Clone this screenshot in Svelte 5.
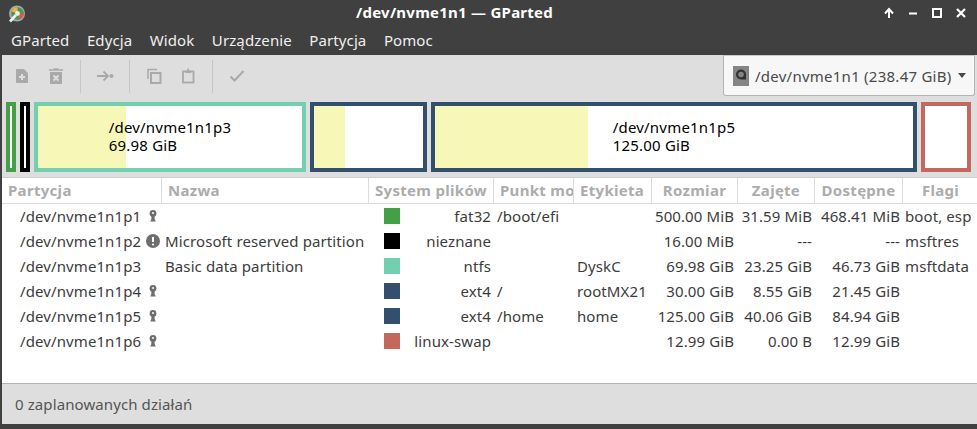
<script>
  const menus = ['GParted', 'Edycja', 'Widok', 'Urządzenie', 'Partycja', 'Pomoc'];
  const parts = [
    { w: 10, color: '#43a047', used: 0 },
    { w: 10, color: '#000000', used: 0 },
    { w: 272, color: '#72d0b0', used: 33.3, name: '/dev/nvme1n1p3', size: '69.98 GiB' },
    { w: 117, color: '#32506e', used: 28.4 },
    { w: 486, color: '#32506e', used: 32, name: '/dev/nvme1n1p5', size: '125.00 GiB' },
    { w: 50, color: '#c4675c', used: 0 }
  ];
  const cols = [
    { t: 'Partycja', w: 160, cls: 'left' },
    { t: 'Nazwa', w: 207, cls: 'left' },
    { t: 'System plików', w: 125, cls: 'center' },
    { t: 'Punkt mo', w: 80, cls: 'left' },
    { t: 'Etykieta', w: 78, cls: 'left' },
    { t: 'Rozmiar', w: 86, cls: 'center' },
    { t: 'Zajęte', w: 77, cls: 'center' },
    { t: 'Dostępne', w: 88, cls: 'center' },
    { t: 'Flagi', w: 75, cls: 'center' }
  ];
  const rows = [
    { p: 'p1', st: 'lock', n: '', c: '#43a047', fs: 'fat32', m: '/boot/efi', l: '', s: '500.00 MiB', u: '31.59 MiB', a: '468.41 MiB', f: 'boot, esp' },
    { p: 'p2', st: 'warn', n: 'Microsoft reserved partition', c: '#000000', fs: 'nieznane', m: '', l: '', s: '16.00 MiB', u: '---', a: '---', f: 'msftres' },
    { p: 'p3', st: '', n: 'Basic data partition', c: '#72d0b0', fs: 'ntfs', m: '', l: 'DyskC', s: '69.98 GiB', u: '23.25 GiB', a: '46.73 GiB', f: 'msftdata' },
    { p: 'p4', st: 'lock', n: '', c: '#32506e', fs: 'ext4', m: '/', l: 'rootMX21', s: '30.00 GiB', u: '8.55 GiB', a: '21.45 GiB', f: '' },
    { p: 'p5', st: 'lock', n: '', c: '#32506e', fs: 'ext4', m: '/home', l: 'home', s: '125.00 GiB', u: '40.06 GiB', a: '84.94 GiB', f: '' },
    { p: 'p6', st: 'lock', n: '', c: '#c4675c', fs: 'linux-swap', m: '', l: '', s: '12.99 GiB', u: '0.00 B', a: '12.99 GiB', f: '' }
  ];
</script>

<div class="window">
  <header class="titlebar">
    <svg class="appicon" width="18" height="18" viewBox="0 0 18 18">
      <circle cx="9" cy="8.500" r="8" fill="#a9a9a9" />
      <circle cx="9.500" cy="8.500" r="6.300" fill="#3f9a52" />
      <path d="M9.500 8.500V2.200A6.300 6.300 0 0 0 3.600 6.500Z" fill="#f2b632" />
      <path d="M9.500 8.500H15.800A6.300 6.300 0 0 1 12 14.300Z" fill="#e0574c" />
      <circle cx="9.500" cy="8.500" r="2.400" fill="#eee" />
      <path d="M2 16.500 8 10" stroke="#f0f0f0" stroke-width="2.600" />
    </svg>
    <span class="title">/dev/nvme1n1 — GParted</span>
    <div class="winbtns">
      <svg width="12" height="12" viewBox="0 0 12 12"><path d="M6 11V3M2 6.500 6 2l4 4.500" fill="none" stroke="#fff" stroke-width="2" /></svg>
      <svg width="12" height="12" viewBox="0 0 12 12"><path d="M2 6.500h8" stroke="#fff" stroke-width="2" /></svg>
      <svg width="12" height="12" viewBox="0 0 12 12"><rect x="2" y="2" width="8" height="8" fill="none" stroke="#fff" stroke-width="2" /></svg>
      <svg width="12" height="12" viewBox="0 0 12 12"><path d="M2 2l8 8M10 2l-8 8" stroke="#fff" stroke-width="2.200" /></svg>
    </div>
  </header>

  <nav class="menubar">
    {#each menus as m}<span class="menu">{m}</span>{/each}
  </nav>

  <div class="inner">
    <div class="toolbar">
      <div class="tools">
        <button class="tool" aria-label="Nowa">
          <svg width="16" height="16" viewBox="0 0 16 16"><path d="M3 1h7l4 4v9a1 1 0 0 1-1 1H3a1 1 0 0 1-1-1V2a1 1 0 0 1 1-1Z" fill="#a9a9a9" /><path d="M8 6v6M5 9h6" stroke="#dedede" stroke-width="2" /></svg>
        </button>
        <button class="tool" aria-label="Usuń">
          <svg width="16" height="16" viewBox="0 0 16 16"><path d="M1 2h14M5.500 1h5" stroke="#a9a9a9" stroke-width="1.700" /><path d="M2 4h12v12H2Z" fill="#a9a9a9" /><path d="M5.500 7.500l5 5M10.500 7.500l-5 5" stroke="#dedede" stroke-width="2" /></svg>
        </button>
        <i class="sep"></i>
        <button class="tool" aria-label="Zmień rozmiar">
          <svg width="18" height="16" viewBox="0 0 18 16"><path d="M1 8h11M7.500 3.500 12 8l-4.500 4.500" fill="none" stroke="#a9a9a9" stroke-width="1.800" /><circle cx="15.500" cy="8" r="2" fill="#a9a9a9" /></svg>
        </button>
        <i class="sep"></i>
        <button class="tool" aria-label="Kopiuj">
          <svg width="16" height="16" viewBox="0 0 16 16"><path d="M2 11V1.500H11" fill="none" stroke="#a9a9a9" stroke-width="1.500" /><rect x="5" y="5" width="9.500" height="10" fill="none" stroke="#a9a9a9" stroke-width="2" /></svg>
        </button>
        <button class="tool" aria-label="Wklej">
          <svg width="16" height="16" viewBox="0 0 16 16"><rect x="3" y="3.500" width="10.500" height="11" fill="none" stroke="#a9a9a9" stroke-width="1.800" /><path d="M5.500 2.500h2V0.500h1.500v2h2V5h-5.500Z" fill="#a9a9a9" /></svg>
        </button>
        <i class="sep"></i>
        <button class="tool" aria-label="Zastosuj">
          <svg width="16" height="16" viewBox="0 0 16 16"><path d="M1.500 8.500l4 4 9-9.500" fill="none" stroke="#a9a9a9" stroke-width="2" /></svg>
        </button>
      </div>
      <div class="combo">
        <svg class="disk" width="16" height="20" viewBox="0 0 16 20"><rect width="16" height="20" fill="#858585" /><path d="M8 3.500a5 5 0 1 0 0 10h5V8.500a5 5 0 0 0-5-5Z" fill="#333" /><circle cx="8" cy="8.500" r="2.800" fill="#858585" /></svg>
        <span>/dev/nvme1n1 (238.47 GiB)</span>
        <i class="caret"></i>
      </div>
    </div>

    <div class="graph">
      {#each parts as part}
        <div class="part" style="width:{part.w}px; border-color:{part.color}; --used:{part.used}%">
          {#if part.name}<div class="label">{part.name}<br />{part.size}</div>{/if}
        </div>
      {/each}
    </div>

    <div class="table">
      <div class="thead">
        {#each cols as c}<div class="th {c.cls}" style="width:{c.w}px">{c.t}</div>{/each}
      </div>
      <div class="tbody">
        {#each rows as r}
          <div class="tr">
            <div class="c-part">
              <span class="devname">/dev/nvme1n1{r.p}</span>
              {#if r.st === 'lock'}
                <svg class="lock" width="8" height="12" viewBox="0 0 8 12"><circle cx="4" cy="3.500" r="3.400" fill="#6e6e6e" /><circle cx="4" cy="3" r="1" fill="#fff" /><path d="M2.600 6h2.800l.4 3.500 1 2H1.200l1-2Z" fill="#6e6e6e" /></svg>
              {:else if r.st === 'warn'}
                <svg class="warn" width="14" height="14" viewBox="0 0 14 14"><circle cx="7" cy="7" r="7" fill="#6e6e6e" /><path d="M7 3v5" stroke="#fff" stroke-width="2" /><circle cx="7" cy="10.500" r="1.100" fill="#fff" /></svg>
              {/if}
            </div>
            <div class="c-name">{r.n}</div>
            <div class="c-fs"><i class="swatch" style="background:{r.c}"></i><span>{r.fs}</span></div>
            <div class="c-mount">{r.m}</div>
            <div class="c-label">{r.l}</div>
            <div class="c-size">{r.s}</div>
            <div class="c-used">{r.u}</div>
            <div class="c-avail">{r.a}</div>
            <div class="c-flags">{r.f}</div>
          </div>
        {/each}
      </div>
    </div>

    <footer class="status">0 zaplanowanych działań</footer>
  </div>
</div>

<style>
  :global(body) { margin: 0; background: #404040; }
  .window {
    width: 977px; height: 429px; display: flex; flex-direction: column;
    font-family: "Noto Sans", sans-serif; font-size: 15px; letter-spacing: .1px; color: #3c3c3c;
    background: #404040; overflow: hidden;
  }
  .titlebar { height: 30px; display: flex; align-items: center; padding-left: 8px; flex: none; }
  .appicon { display: block; margin-top: -2px; flex: none; }
  .title {
    flex: 1; text-align: center; color: #fff; font-weight: 700; letter-spacing: .25px; margin-top: -6px;
  }
  .winbtns { display: flex; gap: 12px; padding-right: 10px; margin-top: -5px; flex: none; }
  .menubar { height: 25px; display: flex; align-items: center; padding: 0 0 5px 11px; gap: 17.5px; color: #efefef; flex: none; box-sizing: border-box; }
  .inner { flex: 1; margin: 0 0 5px 2px; background: #dedede; display: flex; flex-direction: column; min-height: 0; }
  .toolbar { height: 42px; display: flex; justify-content: space-between; flex: none; padding-right: 2px; }
  .tools { display: flex; align-items: center; padding-left: 3px; }
  .tool { width: 34px; height: 30px; padding: 0; border: 0; background: none; display: flex; align-items: center; justify-content: center; }
  .sep { width: 1px; height: 33px; margin: 0 7px; background: #c6c6c6; }
  .combo {
    width: 252px; height: 41px; box-sizing: border-box; background: #f7f7f7; border: 1px solid #b4b4b4;
    border-top-color: #c8c8c8; border-radius: 0 0 3px 3px; display: flex; align-items: center; padding-left: 9px; gap: 6px;
    letter-spacing: .25px; color: #4a4a4a;
  }
  .disk { flex: none; }
  .caret { width: 0; height: 0; border: 4.500px solid transparent; border-top: 5px solid #4a4a4a; border-bottom: 0; margin-left: 1px; }
  .graph { height: 70px; display: flex; gap: 4px; padding: 5px 0 0 4px; flex: none; margin-bottom: 5px; }
  .part {
    box-sizing: border-box; border: 4px solid; height: 70px; padding-bottom: 2px;
    background: linear-gradient(90deg, #f7f7b8 var(--used), #fff var(--used));
    display: flex; align-items: center; justify-content: center; color: #000; line-height: 18px; letter-spacing: .2px;
  }
  .table { flex: 1; background: #fff; display: flex; flex-direction: column; min-height: 0; border-bottom: 1px solid #b4b4b4; }
  .thead { height: 27px; display: flex; flex: none; box-sizing: border-box; border-top: 1px solid #cfcfcf; border-bottom: 1px solid #dcdcdc; }
  .th {
    box-sizing: border-box; font-weight: 700; color: #acacac; padding: 0 6px; line-height: 25px; border-right: 1px solid #dcdcdc;
    white-space: nowrap; overflow: hidden; flex: none; letter-spacing: .3px;
  }
  .th.center { text-align: center; }
  .th:last-child { border-right: 0; }
  .tr { height: 25px; box-sizing: border-box; padding-bottom: 2px; display: flex; align-items: center; white-space: nowrap; }
  .tr > div { flex: none; box-sizing: border-box; overflow: hidden; }
  .c-part { width: 160px; padding-left: 18px; display: flex; align-items: center; }
  .devname { width: 126px; display: block; }
  .lock { margin-left: 3px; }
  .c-name { width: 207px; padding-left: 3px; }
  .c-fs { width: 125px; padding: 0 3px 0 15px; display: flex; align-items: center; justify-content: space-between; }
  .swatch { width: 16px; height: 16px; display: block; flex: none; }
  .c-mount { width: 80px; padding-left: 3px; }
  .c-label { width: 78px; padding-left: 3px; }
  .c-size, .c-used, .c-avail { text-align: right; padding-right: 4px; }
  .c-size { width: 86px; }
  .c-used { width: 77px; padding-right: 3px; }
  .c-avail { width: 88px; padding-right: 3px; }
  .c-flags { width: 75px; padding-left: 2px; }
  .tbody { flex: 1; }
  .status { height: 40px; flex: none; display: flex; align-items: center; padding-left: 13px; color: #555; }
</style>
